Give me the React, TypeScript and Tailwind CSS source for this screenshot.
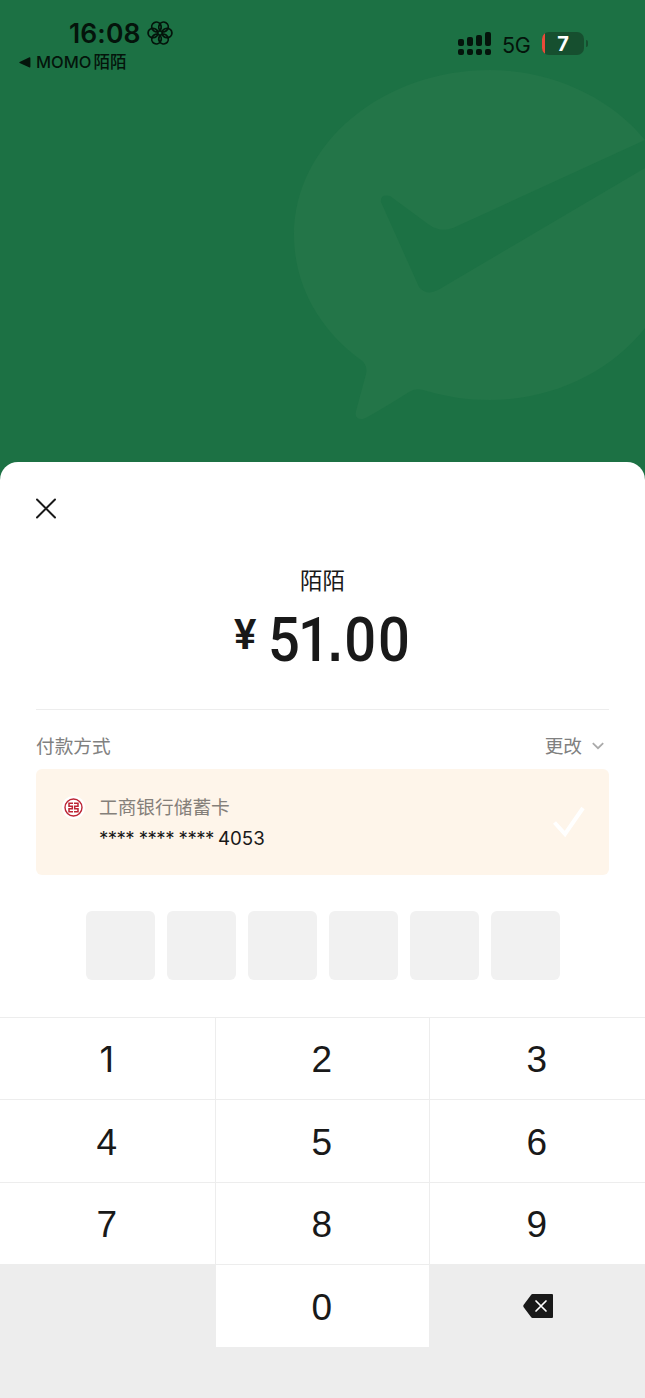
import React from "react";

const box = "h-[69px] w-[69px] rounded-[6px] bg-[#f1f1f1]";

const ui = "font-['Inter','Noto_Sans_CJK_SC',sans-serif]";

function Knot() {
  return (
    <svg className="h-[26px] w-[26px]" viewBox="-13 -13 26 26" fill="none" stroke="#04140b" strokeWidth="1.8">
      {[0, 60, 120, 180, 240, 300].map((a) => (
        <ellipse key={a} cx="7" cy="0" rx="4.9" ry="4.7" transform={`rotate(${a})`} />
      ))}
    </svg>
  );
}

function StatusBar() {
  return (
    <div className={`flex justify-between text-[#04140b] ${ui}`}>
      <div className="pl-[19px] pt-[19px]">
        <div className="flex h-[28px] items-center gap-[5px] pl-[50px]">
          <span className="w-[73px] whitespace-nowrap text-[26.5px] font-semibold leading-[27px] tracking-[0.1px]">16:08</span>
          <Knot />
        </div>
        <div className="mt-[5px] flex h-[20px] items-center gap-[5px]">
          <svg className="h-[11px] w-[12px]" viewBox="0 0 12 11">
            <path d="M0.6 5.1 10 .5Q11.4 0 11.4 1.4V9.4Q11.4 11 10 10.2L.6 6Q0 5.5.6 5.1Z" fill="#04140b" />
          </svg>
          <span className="flex whitespace-nowrap text-[16.5px] font-medium leading-[20px]">
            MOMO<span className="ml-[2px]">陌陌</span>
          </span>
        </div>
      </div>
      <div className="flex h-[24px] pr-[57px] pt-[32px]">
        <svg className="h-[24px] w-[34px]" viewBox="0 0 34 24" fill="#04140b">
          <rect x="0" y="7" width="6" height="7" rx="2" />
          <rect x="9" y="5" width="6" height="9" rx="2" />
          <rect x="18" y="3" width="6" height="11" rx="2" />
          <rect x="27" y="0" width="6" height="14" rx="2" />
          <rect x="0" y="17" width="6" height="6" rx="2" />
          <rect x="9" y="17" width="6" height="6" rx="2" />
          <rect x="18" y="17" width="6" height="6" rx="2" />
          <rect x="27" y="17" width="6" height="6" rx="2" />
        </svg>
        <span className="ml-[10px] w-[30px] text-[21.5px] leading-[27px] tracking-[-0.4px]">5G</span>
        <div className="ml-[10px] flex h-[23px] w-[42px] overflow-hidden rounded-[7px] bg-[#164f2f] text-[20px] font-bold leading-[24px] text-white">
          <div className="w-[3px] bg-[#e94b39]" />
          <span className="flex-1 pr-[3px] text-center">7</span>
        </div>
        <div className="ml-[2px] mt-[8px] h-[7px] w-[2px] rounded-r-full bg-[#164f2f]" />
      </div>
    </div>
  );
}

function Key({ n }: { n: string }) {
  const face = n === "1" ? "font-['Inter',sans-serif] text-[36px] pt-[1px]" : "font-['Liberation_Sans',sans-serif] text-[37px] pt-[2px]";
  return (
    <div className={`flex items-center justify-center bg-white pr-[1.5px] leading-none text-[#191919] ${face}`}>{n}</div>
  );
}

export default function App() {
  return (
    <div className={`relative flex h-[1398px] w-[645px] flex-col overflow-hidden bg-[#1c7144] ${ui}`}>
      <svg className="absolute left-0 top-0 h-[480px] w-[645px]" viewBox="0 0 645 480">
        <path
          fill="#237548"
          d="M645 140C611 98 552 70 490 70C382 70 294 144 294 235C294 286 320 330 361 360Q368 365 366 374L356 411Q354 420 363 419Q371 416 409 392Q415 388 423 390Q455 400 490 400C555 400 612 370 645 328V168L438 290Q426 296 419 287L381 202Q380 194 390 196L428 224Q440 233 453 228Z"
        />
      </svg>
      <div className="relative h-[462px] shrink-0">
        <StatusBar />
      </div>
      <div className="relative flex flex-1 flex-col rounded-t-[18px] bg-white">
        <div className="flex h-[247px] flex-col items-center">
          <div className="flex h-[105px] w-full pl-[36px] pt-[36px]">
            <svg className="h-[21px] w-[20px]" viewBox="0 0 20 20" stroke="#191919" strokeWidth="2" strokeLinecap="round">
              <path d="M1 1 19 19M19 1 1 19" />
            </svg>
          </div>
          <div className="h-[28px] text-[22.5px] leading-[28px] text-[#191919]">陌陌</div>
          <div className="flex items-start self-start pl-[234px] font-['Roboto',sans-serif] font-medium text-[#191919]">
            <span className="mt-[17px] w-[24px] text-[42px] font-semibold leading-[46px]">¥</span>
            <span className="ml-[10px] mt-[9px] flex origin-left scale-x-[0.92] text-[61px] leading-[72px]">
              <span className="tracking-[-2px]">51</span>
              <span className="mr-[2px] pt-[2px] font-['Liberation_Sans',sans-serif] text-[56px] font-bold">.</span>
              <span className="tracking-[2px]">00</span>
            </span>
          </div>
        </div>
        <div className="mx-[36px] h-px bg-[#ededed]" />
        <div className="mx-[36px] flex h-[59px] items-center justify-between pt-[14px] text-[18.7px] leading-[28px] text-[#808080]">
          <span>付款方式</span>
          <span className="flex items-center gap-[10px] pr-[5px]">
            更改
            <svg className="mb-[2px] h-[8px] w-[12px]" viewBox="0 0 12 8" fill="none" stroke="#aaaaaa" strokeWidth="1.8">
              <path d="m.8 1.2 5.2 5 5.2-5" />
            </svg>
          </span>
        </div>
        <div className="mx-[36px] flex h-[106px] justify-between rounded-[6px] bg-[#fef5ea] pl-[26px] pr-[24px]">
          <div className="flex">
            <div className="mt-[27px] flex h-[23px] w-[23px] items-center justify-center rounded-full bg-white">
              <svg className="h-[19px] w-[19px]" viewBox="0 0 19 19" fill="none" stroke="#bd2535">
                <circle cx="9.5" cy="9.5" r="8.5" strokeWidth="1.4" />
                <path strokeWidth="1.5" d="M9 5.2H5V8.2H8.3V10.8H5V13.8H9M10 5.2H14V8.2H10.7V10.8H14V13.8H10" />
              </svg>
            </div>
            <div className="ml-[14px] pt-[25px]">
              <div className="h-[28px] text-[18.7px] leading-[28px] text-[#85807a]">工商银行储蓄卡</div>
              <div className="mt-[4px] flex whitespace-nowrap text-[18.7px] leading-[26px] text-[#191919]">
                <span className="w-[119px] tracking-[-0.58px]">**** **** ****</span>
                <span>4053</span>
              </div>
            </div>
          </div>
          <svg className="mt-[37px] h-[34px] w-[32px]" viewBox="0 0 32 34" fill="none" stroke="white" strokeWidth="4">
            <path d="M1.5 16.5 12 28 30 2" />
          </svg>
        </div>
        <div className="mt-[36px] flex gap-[12px] pl-[85.6px]">
          <div className={box} />
          <div className={box} />
          <div className={box} />
          <div className={box} />
          <div className={box} />
          <div className={box} />
        </div>
        <div className="mt-[37px] grid h-[330px] grid-cols-[215px_213px_215px] grid-rows-[81px_82px_81px_82px] gap-px bg-[#ededed] pt-px">
          {["1", "2", "3", "4", "5", "6", "7", "8", "9"].map((n) => (
            <Key key={n} n={n} />
          ))}
          <div className="bg-[#ededed]" />
          <Key n="0" />
          <div className="flex items-center justify-center bg-[#ededed]">
            <svg className="h-[24px] w-[30px]" viewBox="0 0 30 24">
              <path d="M9.6 0H29Q30 0 30 1V23Q30 24 29 24H9.6Q8.6 24 8 23L.5 13Q0 12 .5 11L8 1Q8.6 0 9.6 0Z" fill="#191919" />
              <path d="m13 7 10 10M23 7 13 17" stroke="white" strokeWidth="1.7" strokeLinecap="round" />
            </svg>
          </div>
        </div>
        <div className="flex-1 bg-[#ededed]" />
      </div>
    </div>
  );
}
